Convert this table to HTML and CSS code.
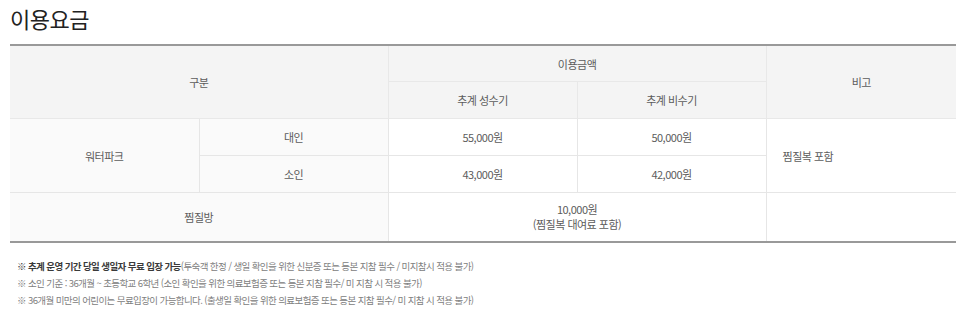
FILE: index.html
```html
<!DOCTYPE html>
<html lang="ko">
<head>
<meta charset="utf-8">
<link rel="stylesheet" href="styles.css">
</head>
<body>
<div class="page">
  <h2 class="title">이용요금</h2>
  <table class="fee">
    <colgroup>
      <col class="c1"><col class="c2"><col class="c3"><col class="c4"><col class="c5">
    </colgroup>
    <thead>
      <tr class="h1">
        <th colspan="2" rowspan="2">구분</th>
        <th colspan="2">이용금액</th>
        <th rowspan="2">비고</th>
      </tr>
      <tr class="h2">
        <th>추계 성수기</th>
        <th>추계 비수기</th>
      </tr>
    </thead>
    <tbody>
      <tr class="r">
        <td rowspan="2" class="lab">워터파크</td>
        <td class="lab">대인</td>
        <td>55,000원</td>
        <td>50,000원</td>
        <td rowspan="2" class="note">찜질복 포함</td>
      </tr>
      <tr class="r">
        <td class="lab">소인</td>
        <td>43,000원</td>
        <td>42,000원</td>
      </tr>
      <tr class="r2">
        <td colspan="2" class="lab">찜질방</td>
        <td colspan="2" class="two"><span class="ln">10,000원</span><span class="ln">(찜질복 대여료 포함)</span></td>
        <td></td>
      </tr>
    </tbody>
  </table>
  <ul class="notes">
    <li><strong>※ 추계 운영 기간 당일 생일자 무료 입장 가능</strong>(투숙객 한정 / 생일 확인을 위한 신분증 또는 등본 지참 필수 / 미지참시 적용 불가)</li>
    <li>※ 소인 기준 : 36개월 ~ 초등학교 6학년 (소인 확인을 위한 의료보험증 또는 등본 지참 필수/ 미 지참 시 적용 불가)</li>
    <li>※ 36개월 미만의 어린이는 무료입장이 가능합니다. (출생일 확인을 위한 의료보험증 또는 등본 지참 필수/ 미 지참 시 적용 불가)</li>
  </ul>
</div>
</body>
</html>
```

FILE: styles.css
```css
html, body {
  margin: 0;
  padding: 0;
  background: #fff;
}
body {
  font-family: "Noto Sans CJK KR", "Noto Sans", sans-serif;
  color: #555;
}
.page {
  padding: 0 10px;
}
.title {
  margin: 0;
  height: 44px;
  font-size: 22px;
  font-weight: 400;
  line-height: 36px;
  color: #222;
  letter-spacing: -0.5px;
}
.fee {
  width: 946px;
  border-collapse: collapse;
  table-layout: fixed;
  border-top: 2px solid #999;
  border-bottom: 2px solid #999;
  font-size: 11px;
  letter-spacing: -0.5px;
  color: #5c5c5c;
}
.c1, .c2, .c3, .c4 { width: 189px; }
.c5 { width: 190px; }
.fee th, .fee td {
  border: 1px solid #e6e6e6;
  padding: 0;
  text-align: center;
  vertical-align: middle;
  font-weight: 400;
  line-height: 14px;
}
.fee tr > :first-child { border-left: 0; }
.fee tr > :last-child { border-right: 0; }
.fee th {
  background: #f4f4f4;
  border-color: #e8e8e8;
}
.fee .h1 th { height: 35px; }
.fee .h2 th { height: 36px; }
.fee .r td { height: 36px; }
.fee .r2 td { height: 48px; }
.fee .lab {
  background: #fafafa;
}
.fee .note {
  text-align: left;
  padding-left: 16px;
}
.fee .two .ln {
  display: block;
  line-height: 15px;
}
.fee thead tr.h1 th { border-top: 0; }
.notes {
  list-style: none;
  margin: 15px 0 0;
  padding: 0 0 0 7px;
  font-size: 9.5px;
  letter-spacing: -0.6px;
  line-height: 17px;
  color: #808080;
}
.notes strong {
  color: #3a3a3a;
  font-weight: 700;
}
```
